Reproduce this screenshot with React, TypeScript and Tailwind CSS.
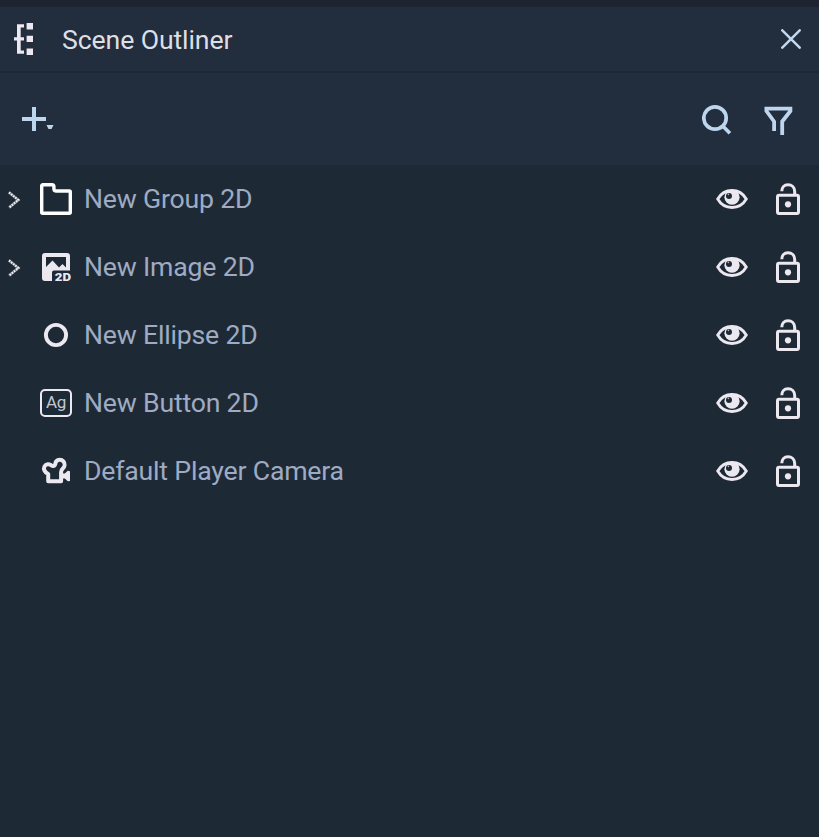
import React from "react";

type Kind = "group" | "image" | "ellipse" | "button" | "camera";

interface SceneItem {
  name: string;
  kind: Kind;
  expandable?: boolean;
}

const items: SceneItem[] = [
  { name: "New Group 2D", kind: "group", expandable: true },
  { name: "New Image 2D", kind: "image", expandable: true },
  { name: "New Ellipse 2D", kind: "ellipse" },
  { name: "New Button 2D", kind: "button" },
  { name: "Default Player Camera", kind: "camera" },
];

function OutlinerIcon() {
  return (
    <svg width="20" height="32" viewBox="0 0 20 32" fill="#ece8f0">
      <path d="M3 1.3h7v3.2H6.7v9.7H10v3.2H6.7v10H10v3.3H3V17.4H0v-3.2h3z" />
      <path d="M12.6 0H19v6.4h-6.4zM12.6 12.8H19V19h-6.4zM12.6 25.6H19V32h-6.4z" />
    </svg>
  );
}

function Chevron() {
  return (
    <svg width="14" height="20" viewBox="0 0 14 20" fill="none">
      <path d="M1 2.3 10.3 10 1 17.7" stroke="#747b86" strokeWidth="2.8" />
      <path d="M1 2.3 10.3 10 1 17.7" stroke="#f0f0f2" strokeWidth="2.2" strokeDasharray="1.6 1.1" />
    </svg>
  );
}

function KindIcon({ kind }: { kind: Kind }) {
  switch (kind) {
    case "group":
      return (
        <svg width="32" height="32" viewBox="0 0 32 32" fill="none" stroke="#fff" strokeWidth="3.4" strokeLinejoin="round">
          <path d="M2.7 1.8H12c1.2 0 1.9.7 1.9 1.8v1.8c0 1.8.8 2.6 2.6 2.6h12.8a1 1 0 0 1 1 1v20.2a1 1 0 0 1-1 1H2.7a1 1 0 0 1-1-1V2.8a1 1 0 0 1 1-1z" />
        </svg>
      );
    case "image":
      return (
        <svg width="32" height="32" viewBox="0 0 32 32">
          <path
            fill="#ece8f0"
            fillRule="evenodd"
            d="M5 2h22q3 0 3 3v14.5H14q-2 0-2 2V30H5q-3 0-3-3V5q0-3 3-3zM6 6v10l6.5-6.5 6.5 7 3.5-3.5 3.5 3.5V6z"
          />
          <text x="14.8" y="30" fontSize="11.5" fontWeight="900" textLength="16.2" lengthAdjust="spacingAndGlyphs" fill="#ece8f0" className="font-[Roboto,sans-serif]">
            2D
          </text>
        </svg>
      );
    case "ellipse":
      return (
        <svg width="32" height="32" viewBox="0 0 32 32" fill="none" stroke="#ece8f0" strokeWidth="3.9">
          <circle cx="16" cy="16" r="10.1" />
        </svg>
      );
    case "button":
      return (
        <span className="mt-2 flex h-7 w-8 items-center justify-center rounded-[5px] border-2 border-[#ece8f0] pb-px text-[17px] leading-none tracking-[-0.4px] text-[#c4c7ce]">
          Ag
        </span>
      );
    case "camera":
      return (
        <svg width="32" height="32" viewBox="0 0 32 32">
          <path
            fill="none"
            stroke="#ece8f0"
            strokeWidth="4"
            strokeLinejoin="round"
            d="M8.2 26.3V19C5 17.4 3 14.3 4.5 11.4c1.4-2.6 4.9-2.9 7-1 1.2 1 2.6.9 3.3-.3.8-1.2.4-2.5 1.4-3.7 1.8-2.1 5.4-2.1 7.2 0 1.9 2.3 1.5 5.2-.6 7.1-1.2 1.1-1.7 2-1.7 3.6v9.2z"
          />
          <path fill="#ece8f0" d="M22 18.5h2.8l3-2.7 2.2.4V26l-2.2.3-3-2.7H22z" />
        </svg>
      );
  }
}

function EyeIcon() {
  return (
    <svg width="32" height="20" viewBox="0 0 32 20">
      <path fill="none" stroke="#ece8f0" strokeWidth="2.8" d="M1.7 10C5 4.3 10 1.5 16 1.5S27 4.3 30.3 10C27 15.7 22 18.5 16 18.5S5 15.7 1.7 10z" />
      <circle cx="16" cy="8.2" r="7.6" fill="#ece8f0" />
      <circle cx="13" cy="7" r="3" fill="#1e2936" />
      <circle cx="12.4" cy="5.4" r="0.8" fill="#aeb0b9" />
    </svg>
  );
}

function LockIcon() {
  return (
    <svg width="26" height="32" viewBox="0 0 26 32">
      <g fill="none" stroke="#ece8f0" strokeWidth="3">
        <rect x="2.5" y="12.2" width="21" height="18.3" rx="1.5" />
        <path d="M6.8 8.3C6.8 4.3 9.3 1.7 13 1.7s6.7 2.6 6.7 6.8V12" />
      </g>
      <circle cx="13" cy="21.3" r="3.1" fill="#ece8f0" />
    </svg>
  );
}

function Row({ item }: { item: SceneItem }) {
  return (
    <div className="flex h-[68px] items-center">
      <div className="flex w-10 pl-2 pt-0.5">{item.expandable && <Chevron />}</div>
      <div className="flex h-8 w-8 justify-center">
        {item.kind === "button" ? (
          <div className="-mt-1.5">
            <KindIcon kind={item.kind} />
          </div>
        ) : (
          <KindIcon kind={item.kind} />
        )}
      </div>
      <span className="ml-3 flex-1 text-[26.67px] leading-8 tracking-[-0.2px] text-[#9eabc2]">{item.name}</span>
      <EyeIcon />
      <div className="ml-[27px] mr-[18px]">
        <LockIcon />
      </div>
    </div>
  );
}

export default function App() {
  return (
    <div className="flex h-screen w-full flex-col overflow-hidden bg-[#1e2936] font-[Roboto,sans-serif]">
      <div className="h-[7px] shrink-0 bg-[#1f2530]" />
      <header className="flex h-16 shrink-0 items-center bg-[#222d3d] pl-3.5 pr-[18px]">
        <OutlinerIcon />
        <h1 className="ml-7 flex-1 pt-0.5 text-[26.67px] leading-8 tracking-[-0.12px] text-[#dedfe4]">Scene Outliner</h1>
        <svg width="20" height="20" viewBox="0 0 20 20" stroke="#c2d8ee" strokeWidth="2.5" strokeLinecap="round">
          <path d="m1.3 1.3 17.4 17.4M18.7 1.3 1.3 18.7" />
        </svg>
      </header>
      <div className="h-0.5 shrink-0 bg-[#1d2734]" />
      <div className="flex h-[92px] shrink-0 items-center bg-[#222d3d] pl-[22px] pr-[26px]">
        <svg width="32" height="24" viewBox="0 0 32 24" fill="#bed5ee">
          <path d="M10 0h4v10h10v4H14v10h-4V14H0v-4h10z" />
          <path d="M24.5 18h7l-2 4h-3z" />
        </svg>
        <span className="flex-1" />
        <svg className="mt-px" width="30" height="31" viewBox="0 0 30 31" fill="none" stroke="#bed5ee" strokeWidth="3.7">
          <circle cx="13" cy="14" r="11.2" />
          <path d="m20.7 22 7.2 7.2" />
        </svg>
        <svg className="ml-8 mt-1" width="29" height="30" viewBox="0 0 29 30" fill="none" stroke="#bed5ee" strokeWidth="3.8">
          <path d="M10.1 25V15.5L2.4 5V2.7h24V5l-8.2 10.5V29" />
        </svg>
      </div>
      <main className="flex-1">
        {items.map((item) => (
          <Row key={item.name} item={item} />
        ))}
      </main>
    </div>
  );
}
